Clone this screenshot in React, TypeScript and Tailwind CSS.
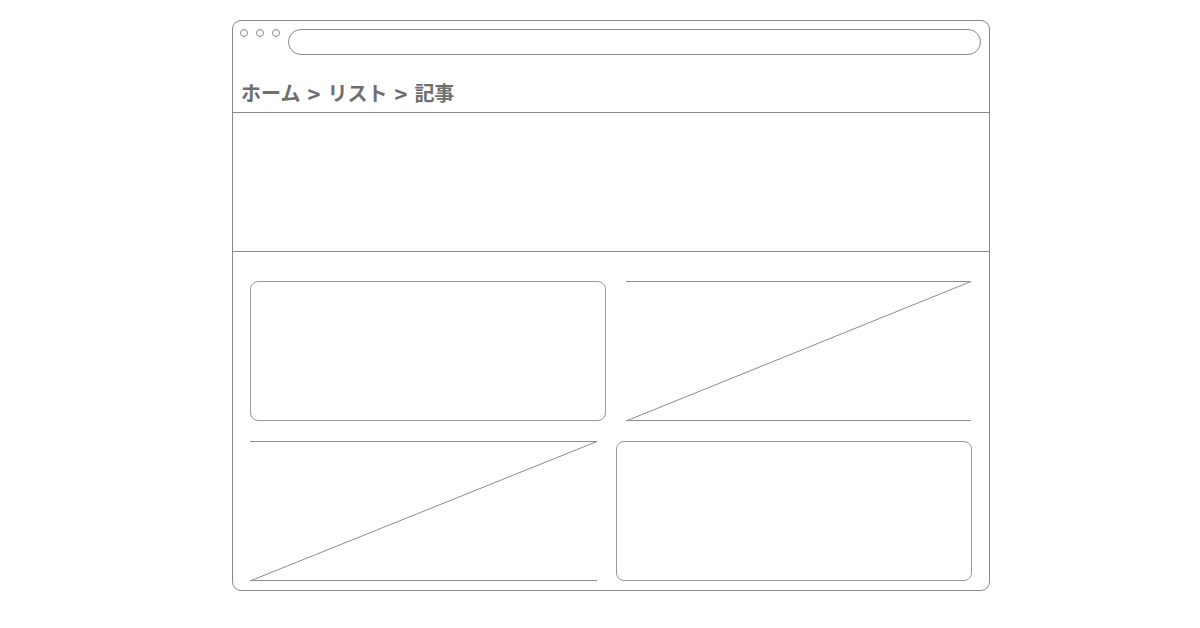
const lineColor = '#8c8c8c';

function ZCard({ flip }: { flip?: boolean }) {
  // a "picture" placeholder: top rule, bottom rule and one diagonal
  return (
    <div className={flip ? 'h-full pr-[9px]' : 'h-full pl-[10px] pr-[1px]'}>
      <svg width="100%" height="100%" className="block overflow-visible">
        <line x1="0" y1="0.5" x2="100%" y2="0.5" stroke={lineColor} strokeWidth="1" />
        <line x1="0" y1="100%" x2="100%" y2="100%" stroke={lineColor} strokeWidth="1" transform="translate(0,-0.5)" />
        <line x1="0" y1="100%" x2="100%" y2="0.5" stroke={lineColor} strokeWidth="1" />
      </svg>
    </div>
  );
}

function BoxCard() {
  return <div className="h-full rounded-[8px] border border-[#999]" />;
}

const sep = <span className="px-[7px] text-[22px]">&gt;</span>;

export default function App() {
  return (
    <div className="w-[1200px] h-[628px] bg-white overflow-hidden pt-[20px] pl-[232px]">
      <div className="w-[758px] h-[571px] rounded-[9px] border border-[#888] flex flex-col">
        <div className="pl-[7px] pr-[8px] pt-[8px] border-b border-[#888]">
          <div className="flex items-start">
            <div className="flex gap-[8px]">
              <span className="w-[8px] h-[8px] rounded-full border border-[#888]" />
              <span className="w-[8px] h-[8px] rounded-full border border-[#888]" />
              <span className="w-[8px] h-[8px] rounded-full border border-[#888]" />
            </div>
            <div className="ml-[8px] flex-1 h-[26px] rounded-full border border-[#888]" />
          </div>
          <div
            className="mt-[24px] pl-[1px] pb-[5px] h-[33px] text-[20px] leading-[28px] font-bold text-[#6e6e6e] flex items-center"
            style={{ fontFamily: '"Noto Sans CJK JP", "Noto Sans", sans-serif' }}
          >
            <span>ホーム</span>
            {sep}
            <span>リスト</span>
            {sep}
            <span>記事</span>
          </div>
        </div>
        <div className="h-[139px] border-b border-[#888]" />
        <div className="flex-1 pt-[29px] pl-[17px] pr-[17px] pb-[8px]">
          <div className="grid grid-cols-2 grid-rows-[140px_140px] gap-x-[10px] gap-y-[20px]">
            <BoxCard />
            <ZCard />
            <ZCard flip />
            <BoxCard />
          </div>
        </div>
      </div>
    </div>
  );
}
